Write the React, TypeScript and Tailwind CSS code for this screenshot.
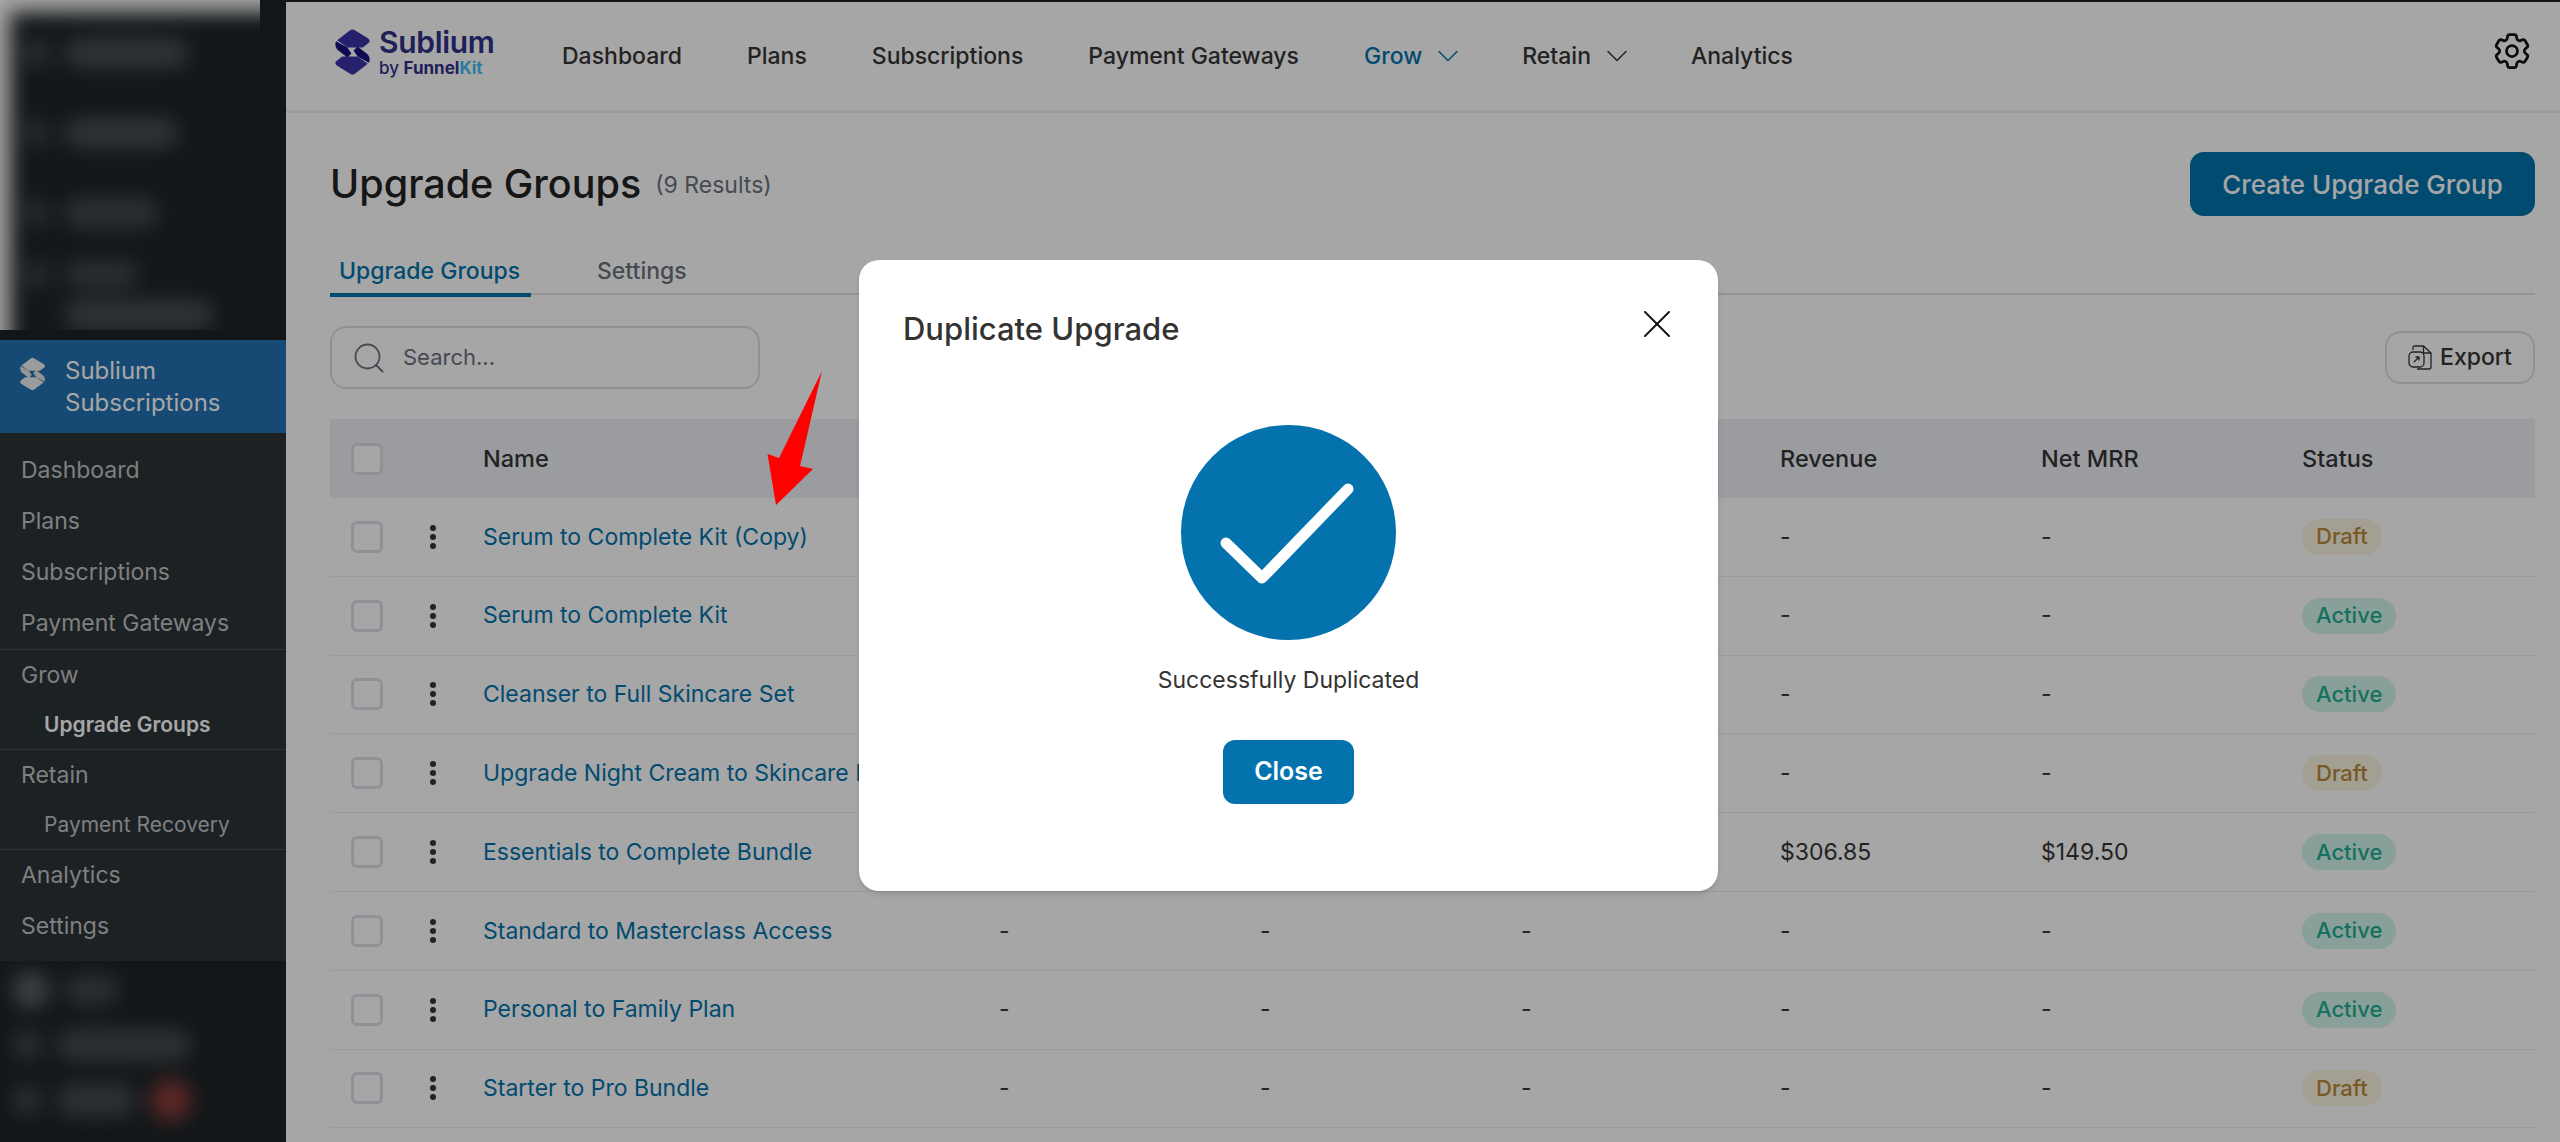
import { ChevronDown, Search, X } from "lucide-react";
import { HiOutlineCog6Tooth } from "react-icons/hi2";

const navItems = [
  { label: "Dashboard" },
  { label: "Plans" },
  { label: "Subscriptions" },
  { label: "Payment Gateways" },
  { label: "Grow", caret: true, active: true },
  { label: "Retain", caret: true },
  { label: "Analytics" },
];

const rows = [
  { name: "Serum to Complete Kit (Copy)", revenue: "-", mrr: "-", status: "Draft" },
  { name: "Serum to Complete Kit", revenue: "-", mrr: "-", status: "Active" },
  { name: "Cleanser to Full Skincare Set", revenue: "-", mrr: "-", status: "Active" },
  { name: "Upgrade Night Cream to Skincare Kit", revenue: "-", mrr: "-", status: "Draft" },
  { name: "Essentials to Complete Bundle", revenue: "$306.85", mrr: "$149.50", status: "Active" },
  { name: "Standard to Masterclass Access", revenue: "-", mrr: "-", status: "Active" },
  { name: "Personal to Family Plan", revenue: "-", mrr: "-", status: "Active" },
  { name: "Starter to Pro Bundle", revenue: "-", mrr: "-", status: "Draft" },
];

const rowGrid = "grid grid-cols-[153px_516px_261px_261px_259px_261px_261px_1fr] items-center";

function SubliumMark({ className, light }: { className: string; light?: boolean }) {
  const main = light ? "#f0f0f1" : "#3a34a8";
  const dark = light ? "#e4e5e7" : "#17127e";
  return (
    <svg viewBox="0 0 34 45" className={className}>
      <path d="M15 1 Q17 0 19 1 L32 9 Q35 11 33 13.500 L27 18 L12 18 L2 11 Z" fill={main} />
      <path d="M1 12 L12 18 L16 24 L12 28 L2 20 Q-1 16 1 12 Z" fill={dark} />
      <path d="M19 44 Q17 45 15 44 L2 36 Q-1 34 1 31.500 L7 27 L22 27 L32 34 Z" fill={main} />
      <path d="M33 33 L22 27 L18 21 L22 17 L32 25 Q35 29 33 33 Z" fill={dark} />
    </svg>
  );
}

function SideLink({ label, sub, current, height }: { label: string; sub?: boolean; current?: boolean; height?: string }) {
  return (
    <div
      className={`flex items-center ${height ?? "h-[50.5px]"} ${sub ? "pl-[44px] text-[21px]" : "pl-[21px] text-[23px]"} ${
        current ? "font-semibold text-white text-[21.5px]" : "text-[#c3c4c7]"
      }`}
    >
      {label}
    </div>
  );
}

function BlurRow({ icon, label, className }: { icon: string; label: string; className: string }) {
  return (
    <div className={`flex items-center gap-[14px] ${className}`}>
      <div className={`shrink-0 rounded-full ${icon}`} />
      <div className={`rounded-full ${label}`} />
    </div>
  );
}

function Sidebar() {
  return (
    <aside className="w-[286px] shrink-0 bg-[#1d2327] flex flex-col h-full">
      {/* blurred wp menu, top */}
      <div className="w-[260px] h-[330px] bg-white overflow-hidden shrink-0">
        <div className="ml-[10px] mt-[12px] w-[340px] h-[400px] bg-[#1d2327] blur-[10px] pt-[24px] pl-[14px]">
          <BlurRow className="mt-[2px]" icon="w-[26px] h-[28px] bg-[#454b50]" label="w-[125px] h-[30px] bg-[#4a5055]" />
          <BlurRow className="mt-[50px]" icon="w-[26px] h-[28px] bg-[#3f454a]" label="w-[115px] h-[30px] bg-[#4a5055]" />
          <BlurRow className="mt-[50px]" icon="w-[26px] h-[28px] bg-[#3f454a]" label="w-[95px] h-[30px] bg-[#454b50]" />
          <BlurRow className="mt-[32px]" icon="w-[26px] h-[28px] bg-[#3f454a]" label="w-[75px] h-[28px] bg-[#42484d]" />
          <div className="ml-[40px] mt-[12px] w-[150px] h-[30px] rounded-full bg-[#4a5055]" />
        </div>
      </div>

      <div className="h-[10px] shrink-0" />

      <div className="h-[93px] bg-[#2271b1] flex items-start pl-[20px] pt-[15px] gap-[20px] text-[24px] leading-[32px] text-white shrink-0">
        <SubliumMark light className="w-[25px] h-[34px] mt-[2px] shrink-0" />
        <div>
          Sublium
          <br />
          Subscriptions
        </div>
      </div>

      <div className="bg-[#2c3338] shrink-0 h-[528px]">
        <div className="pt-[12px] border-b border-[#4a5055]">
          <SideLink label="Dashboard" height="h-[51px]" />
          <SideLink label="Plans" height="h-[51px]" />
          <SideLink label="Subscriptions" height="h-[51px]" />
          <SideLink label="Payment Gateways" height="h-[51px]" />
        </div>
        <div className="border-b border-[#4a5055]">
          <SideLink label="Grow" />
          <SideLink label="Upgrade Groups" sub current height="h-[48px]" />
        </div>
        <div className="border-b border-[#4a5055]">
          <SideLink label="Retain" />
          <SideLink label="Payment Recovery" sub height="h-[49px]" />
        </div>
        <SideLink label="Analytics" />
        <SideLink label="Settings" />
      </div>

      {/* blurred wp menu, bottom */}
      <div className="flex-1 overflow-hidden w-[262px]">
        <div className="blur-[10px] pt-[10px] pl-[12px]">
          <BlurRow className="" icon="w-[38px] h-[38px] bg-[#5c6368]" label="w-[55px] h-[28px] bg-[#454b50]" />
          <BlurRow className="mt-[20px]" icon="w-[30px] h-[30px] bg-[#444a4e]" label="w-[135px] h-[32px] bg-[#474d52]" />
          <div className="mt-[18px] flex items-center gap-[14px]">
            <div className="w-[30px] h-[30px] rounded-full bg-[#444a4e]" />
            <div className="w-[80px] h-[32px] rounded-full bg-[#474d52]" />
            <div className="w-[42px] h-[42px] rounded-full bg-[#8e3e3b]" />
          </div>
        </div>
      </div>
    </aside>
  );
}

function TopNav() {
  return (
    <header className="h-[111px] border-b-[3px] border-[#eeeeee] flex items-center pl-[49px] pr-[29px] shrink-0">
      <div className="flex items-center gap-[9px] w-[227px] shrink-0 -mt-[8px]">
        <SubliumMark className="w-[35px] h-[46px] shrink-0" />
        <div>
          <div className="text-[30px] leading-[31px] font-semibold text-[#31318a] tracking-[-0.3px]">Sublium</div>
          <div className="text-[17px] leading-[20px] font-medium text-[#31318a]">
            by <span className="font-bold">Funnel</span>
            <span className="font-bold text-[#45bdf2]">Kit</span>
          </div>
        </div>
      </div>
      <nav className="flex items-center gap-[65px] text-[23px] font-medium text-[#353535]">
        {navItems.map((item) => (
          <div
            key={item.label}
            className={`flex items-center gap-[8px] ${item.active ? "text-[#0473ad]" : ""}`}
          >
            {item.label}
            {item.caret && <ChevronDown size={36} strokeWidth={1} className="-my-[9px] -mr-[9px]" />}
          </div>
        ))}
      </nav>
      <HiOutlineCog6Tooth className="ml-auto text-[#111111] -mt-[10px] -mr-[3px]" size={44} />
    </header>
  );
}

function StatusBadge({ status }: { status: string }) {
  return (
    <span
      className={`inline-flex items-center h-[36px] px-[14px] rounded-full text-[22px] font-medium ${
        status === "Draft" ? "bg-[#faf4e0] text-[#b88a3a]" : "bg-[#d3f5ec] text-[#1fae92]"
      }`}
    >
      {status}
    </span>
  );
}

function Table() {
  return (
    <div className="text-[23px]">
      <div className={`${rowGrid} h-[79px] bg-[#eef0f6] text-[23.5px] font-medium text-[#353535]`}>
        <div className="pl-[21px]">
          <div className="w-[32px] h-[32px] rounded-[6px] border-[3px] border-[#dedfe7] bg-white" />
        </div>
        <div>Name</div>
        <div />
        <div />
        <div />
        <div>Revenue</div>
        <div>Net MRR</div>
        <div>Status</div>
      </div>
      {rows.map((row) => (
        <div key={row.name} className={`${rowGrid} h-[78.8px] border-b border-[#eeeeee] text-[#353535]`}>
          <div className="flex items-center">
            <div className="ml-[21px] w-[32px] h-[32px] rounded-[6px] border-[3px] border-[#dedfe7] bg-white" />
            <div className="ml-[47px] flex flex-col gap-[3px]">
              <div className="w-[6px] h-[6px] rounded-full bg-[#353535]" />
              <div className="w-[6px] h-[6px] rounded-full bg-[#353535]" />
              <div className="w-[6px] h-[6px] rounded-full bg-[#353535]" />
            </div>
          </div>
          <div className="text-[#0473ad] whitespace-nowrap overflow-hidden">{row.name}</div>
          <div>-</div>
          <div>-</div>
          <div>-</div>
          <div>{row.revenue}</div>
          <div>{row.mrr}</div>
          <div>
            <StatusBadge status={row.status} />
          </div>
        </div>
      ))}
    </div>
  );
}

function ExportIcon() {
  return (
    <svg viewBox="0 0 24 25" className="w-[24px] h-[25px]" fill="none" stroke="#353535" strokeWidth="1.3">
      <path d="M5 5 V2.5 Q5 1 6.5 1 H15.5 L23 8 V22 Q23 24 21 24 H9" />
      <path d="M15.5 1 V8 H23" />
      <rect x="1" y="7" width="15" height="15" rx="4" />
      <path d="M6 17 L11 12 M7.500 12 H11 V15.500" />
    </svg>
  );
}

function Modal() {
  return (
    <div className="absolute inset-0 z-10 bg-black/35 flex items-start justify-center pt-[260px] pl-[17px]">
      <div className="w-[859px] h-[631px] bg-white rounded-[20px] shadow-md flex flex-col">
        <div className="flex items-start justify-between pl-[44px] pr-[37px] pt-[40px]">
          <h2 className="mt-[11px] text-[31px] leading-[36px] font-medium text-[#333333]">Duplicate Upgrade</h2>
          <X size={48} strokeWidth={1} className="text-[#111111]" />
        </div>
        <div className="flex flex-col items-center mt-[29px]">
          <svg viewBox="0 0 215 215" className="w-[215px] h-[215px] mt-[48px]">
            <circle cx="107.5" cy="107.5" r="107.5" fill="#0473ad" />
            <path d="M45 118 L81 153 L167 64" fill="none" stroke="#ffffff" strokeWidth="11" strokeLinecap="round" strokeLinejoin="round" />
          </svg>
          <p className="mt-[25px] text-[23px] leading-[30px] text-[#333333]">Successfully Duplicated</p>
          <button className="mt-[45px] w-[131px] h-[64px] rounded-[12px] bg-[#0473ad] text-white text-[25px] font-semibold">
            Close
          </button>
        </div>
      </div>
    </div>
  );
}

export default function App() {
  return (
    <div className="relative w-[2560px] h-[1142px] overflow-hidden flex bg-white font-['Inter',sans-serif]">
      <Sidebar />
      <main className="flex-1 min-w-0 flex flex-col border-t-2 border-[#1d2327]">
        <TopNav />
        <div className="pl-[44px] pr-[25px]">
          <div className="flex items-center justify-between mt-[39px]">
            <div className="flex items-center gap-[14px]">
              <h1 className="text-[39.5px] leading-[64px] font-medium text-[#222222]">Upgrade Groups</h1>
              <span className="text-[23px] text-[#6b7280] mt-[2px]">(9 Results)</span>
            </div>
            <button className="w-[345px] h-[64px] rounded-[14px] bg-[#0473ad] text-white text-[26px] font-medium">
              Create Upgrade Group
            </button>
          </div>

          <div className="flex mt-[42px] border-b-2 border-[#e2e3ea] h-[37px] text-[23px] font-medium">
            <div className="w-[201px] pl-[9px] text-[#0473ad] leading-[26px] h-[39px] border-b-[4px] border-[#0473ad]">
              Upgrade Groups
            </div>
            <div className="ml-[66px] text-[#6b7280] leading-[26px]">Settings</div>
          </div>

          <div className="flex items-center justify-between mt-[31px]">
            <div className="w-[430px] h-[63px] rounded-[16px] border-2 border-[#dedfe7] flex items-center pl-[19px] gap-[16px] text-[22px] text-[#6b7280]">
              <Search size={36} strokeWidth={1.2} />
              Search...
            </div>
            <button className="w-[150px] h-[53px] rounded-[16px] border-2 border-[#dedfe7] flex items-center justify-center gap-[8px] text-[23px] font-medium text-[#353535]">
              <ExportIcon />
              Export
            </button>
          </div>

          <div className="mt-[30px]">
            <Table />
          </div>
        </div>
      </main>

      <Modal />

      {/* annotation arrow */}
      <svg viewBox="0 0 70 140" className="absolute left-[762px] top-[368px] w-[70px] h-[140px] z-20">
        <path d="M60 3 L17 90 L5.500 86 L14 137 L51 101 L38 98 Z" fill="#ff0000" />
      </svg>
    </div>
  );
}
